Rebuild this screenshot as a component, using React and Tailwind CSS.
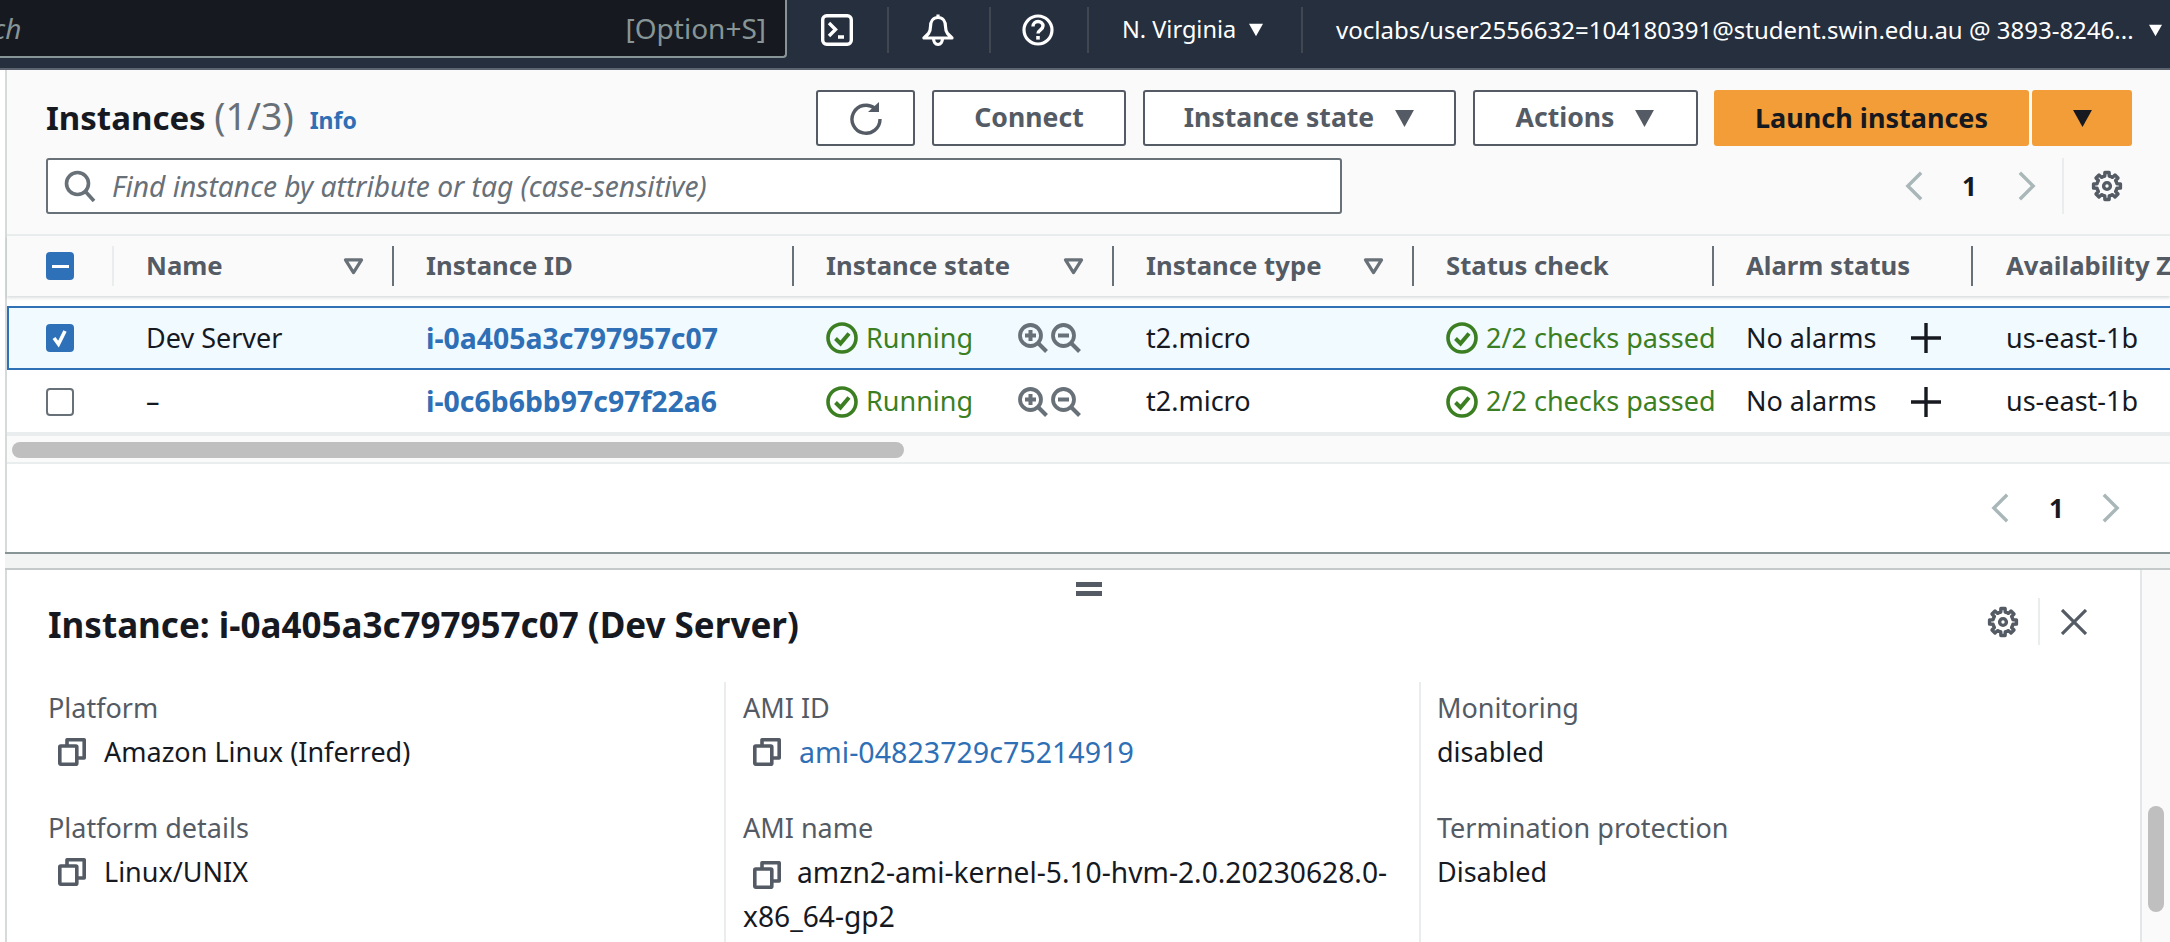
import React from "react";

const gearPath = (() => {
  const pts = [];
  const teeth = 8;
  for (let i = 0; i < teeth; i++) {
    const a = (i / teeth) * Math.PI * 2;
    const w = (Math.PI * 2) / teeth;
    [[-0.5, 10.2], [-0.28, 10.2], [-0.2, 13.6], [0.2, 13.6], [0.28, 10.2]].forEach(([o, r]) => {
      const t = a + o * w;
      pts.push(`${(16 + r * Math.cos(t)).toFixed(2)} ${(16 + r * Math.sin(t)).toFixed(2)}`);
    });
  }
  return "M" + pts.join("L") + "Z";
})();

const Gear = ({ className }) => (
  <svg viewBox="0 0 32 32" className={className} fill="none" stroke="#545b64" strokeWidth="3.4" strokeLinejoin="round">
    <path d={gearPath} />
    <circle cx="16" cy="16" r="3.4" />
  </svg>
);

const Caret = ({ className, color = "#545b64" }) => (
  <svg viewBox="0 0 20 18" className={className}>
    <path d="M1 1h18L10 17z" fill={color} />
  </svg>
);

const SortCaret = () => (
  <svg viewBox="0 0 22 18" className="w-[21px] h-[17px] shrink-0">
    <path d="M2.5 2h17L11 15.5z" fill="none" stroke="#687078" strokeWidth="3.4" strokeLinejoin="round" />
  </svg>
);

const Chevron = ({ left, className }) => (
  <svg viewBox="0 0 20 32" className={className} fill="none" stroke="#aab7b8" strokeWidth="3.6">
    <path d={left ? "M17 2 3 16l14 14" : "M3 2l14 14L3 30"} />
  </svg>
);

const CheckCircle = () => (
  <svg viewBox="0 0 32 32" className="w-8 h-8 shrink-0" fill="none" stroke="#3b7f22" strokeWidth="3.6">
    <circle cx="16" cy="16" r="14" />
    <path d="M9.5 16.5l5 5 8.5-10" strokeWidth="4" />
  </svg>
);

const Mag = ({ plus }) => (
  <svg viewBox="0 0 30 30" className="w-[30px] h-[30px] shrink-0" fill="none" stroke="#687078" strokeWidth="3.8">
    <circle cx="12.5" cy="12.5" r="10.5" />
    <path d="M20 20l8.5 8.5" strokeWidth="4" />
    <path d={plus ? "M7 12.5h11M12.5 7v11" : "M7 12.5h11"} strokeWidth="4" />
  </svg>
);

const Copy = () => (
  <svg viewBox="0 0 28 28" className="w-7 h-7 shrink-0" fill="none" stroke="#545b64" strokeWidth="3.6" strokeLinejoin="round">
    <rect x="1.8" y="8" width="17" height="18.2" rx="1" />
    <path d="M9 7.5V1.8h17.2V20H19" />
  </svg>
);

const NavSep = () => <div className="w-[2px] h-[46px] bg-[#414750] shrink-0" />;

const OutlineBtn = ({ w, children }) => (
  <button className={"h-[56px] flex items-center justify-center gap-5 bg-white border-2 border-[#545b64] rounded-[3px] text-[#545b64] font-bold text-[26.6px] shrink-0 " + w}>
    {children}
  </button>
);

const cols = "grid grid-cols-[107px_280px_400px_320px_300px_300px_259px_197px]";

const HeadCell = ({ children, sort }) => (
  <div className="h-[40px] flex items-center justify-between pl-[32px] pr-[28px] border-r-2 border-[#687078]">
    <span className="whitespace-nowrap">{children}</span>
    {sort && <SortCaret />}
  </div>
);

const Row = ({ checked, name, id }) => (
  <div className={cols + " items-center text-[#16191f] text-[27px] " + (checked ? "h-[64px] bg-[#f1faff] border-y-2 border-[#3070b6] shadow-[inset_2px_0_0_#3070b6]" : "h-[62px] bg-white pt-[1px]")}>
    <div className="pl-[39px]">
      {checked ? (
        <div className="w-[28px] h-[28px] rounded-[4px] bg-[#2f71b8] flex items-center justify-center">
          <svg viewBox="0 0 28 28" className="w-7 h-7" fill="none" stroke="#fff" strokeWidth="3.6"><path d="M8 14l4.5 6L19 7" /></svg>
        </div>
      ) : (
        <div className="w-[28px] h-[28px] rounded-[4px] border-2 border-[#687078] bg-white" />
      )}
    </div>
    <div className="pl-[32px]">{name}</div>
    <div className="pl-[32px] font-bold text-[#2e6fb5] text-[28.4px] whitespace-nowrap">{id}</div>
    <div className="pl-[32px] flex items-center">
      <CheckCircle />
      <span className="ml-[8px] text-[#3b7f22] w-[152px]">Running</span>
      <div className="flex items-center gap-[3px]"><Mag plus /><Mag /></div>
    </div>
    <div className="pl-[32px]">t2.micro</div>
    <div className="pl-[32px] flex items-center">
      <CheckCircle />
      <span className="ml-[8px] text-[#3b7f22] whitespace-nowrap w-[230px] overflow-hidden shrink-0">2/2 checks passed</span>
    </div>
    <div className="pl-[32px] flex items-center">
      <span className="w-[165px] shrink-0">No alarms</span>
      <svg viewBox="0 0 30 30" className="w-[30px] h-[30px] shrink-0" fill="none" stroke="#16191f" strokeWidth="3.4"><path d="M0 15h30M15 0v30" /></svg>
    </div>
    <div className="pl-[33px] whitespace-nowrap">us-east-1b</div>
  </div>
);

const Field = ({ label, children }) => (
  <div className="mb-[32px]">
    <div className="text-[#545b64] leading-[44px]">{label}</div>
    {children}
  </div>
);

const Value = ({ children, link }) => (
  <div className="flex items-center h-[44px]">
    <div className="ml-[10px] mr-[18px]"><Copy /></div>
    <span className={link ? "text-[#2e6fb5] text-[28.6px]" : ""}>{children}</span>
  </div>
);

export default function App() {
  return (
    <div className="w-[2170px] h-[942px] overflow-hidden flex flex-col bg-white font-['Noto_Sans',sans-serif]">
      {/* top navigation */}
      <div className="h-[70px] shrink-0 bg-[#252f3e] border-b-2 border-[#5b646f] flex items-start text-white">
        <div className="w-[787px] h-[58px] shrink-0 bg-[#16191f] border-r-2 border-b-2 border-[#879596] rounded-br-[4px] flex items-center justify-between pr-[19px] text-[#879596] text-[28px] overflow-hidden">
          <span className="italic -ml-[62px]">Search</span>
          <span>[Option+S]</span>
        </div>
        <div className="flex-1 h-[52px] mt-[4px] flex items-center text-[24px]">
          <svg viewBox="0 0 32 32" className="w-8 h-8 ml-[34px] shrink-0" fill="none" stroke="#fff" strokeWidth="3.4">
            <rect x="1.7" y="1.7" width="28.6" height="28.6" rx="4" />
            <path d="M8 9l6.5 6.5L8 22M17 23h6" />
          </svg>
          <div className="ml-[34px]"><NavSep /></div>
          <svg viewBox="0 0 32 34" className="w-8 h-[34px] ml-[33px] shrink-0" fill="none" stroke="#fff" strokeWidth="3.2" strokeLinejoin="round">
            <path d="M16 1.5v3M16 4.5c-5 0-7.5 4-7.5 9 0 3-.5 5-2 7L2 25h28l-4.5-4.5c-1.5-2-2-4-2-7 0-5-2.5-9-7.5-9z" />
            <path d="M11.5 25c0 4 2 6.5 4.5 6.5s4.5-2.5 4.5-6.5" />
          </svg>
          <div className="ml-[35px]"><NavSep /></div>
          <svg viewBox="0 0 32 32" className="w-8 h-8 ml-[31px] shrink-0" fill="none" stroke="#fff" strokeWidth="3.2">
            <circle cx="16" cy="16" r="14" />
            <path d="M11 12.5c0-3 2.2-5 5-5s5 2 5 4.6c0 3.6-5 3.8-5 7.4" strokeWidth="3.4" />
            <path d="M16 22v3.6" strokeWidth="3.6" />
          </svg>
          <div className="ml-[33px]"><NavSep /></div>
          <span className="ml-[33px] whitespace-nowrap w-[113px] shrink-0 text-[23.5px]">N. Virginia</span>
          <Caret className="w-[16px] h-[14px] ml-[13px] shrink-0" color="#fff" />
          <div className="ml-[37px]"><NavSep /></div>
          <span className="ml-[33px] whitespace-nowrap w-[800px] shrink-0">voclabs/user2556632=104180391@student.swin.edu.au @ 3893-8246...</span>
          <Caret className="w-[15px] h-[13px] ml-[12px] shrink-0" color="#fff" />
        </div>
      </div>

      {/* instances */}
      <div className="ml-[5px] border-l-2 border-[#d5dbdb] h-[482px] shrink-0 flex flex-col bg-white">
        <div className="h-[164px] shrink-0 bg-[#fafafa] pl-[39px] flex flex-col">
          <div className="h-[56px] mt-[20px] flex items-center">
            <h1 className="text-[33px] font-bold text-[#16191f] whitespace-nowrap -mt-[3px]">Instances <span className="font-normal text-[#687078] text-[37.5px]">(1/3)</span></h1>
            <span className="ml-[16px] mt-[4px] font-bold text-[#2e6fb5] text-[23px]">Info</span>
            <div className="ml-auto mr-[38px] flex items-center gap-[17px]">
              <OutlineBtn w="w-[99px]">
                <svg viewBox="0 0 34 34" className="w-[34px] h-[34px]" fill="none" stroke="#545b64" strokeWidth="3.4">
                  <path d="M26 7.5A14 14 0 1 0 31 18" />
                  <path d="M19 11h11V1z" fill="#545b64" strokeWidth="0" />
                </svg>
              </OutlineBtn>
              <OutlineBtn w="w-[194px]">Connect</OutlineBtn>
              <OutlineBtn w="w-[313px]">Instance state <Caret className="w-[21px] h-[19px]" /></OutlineBtn>
              <OutlineBtn w="w-[225px]">Actions <Caret className="w-[21px] h-[19px]" /></OutlineBtn>
              <div className="flex gap-[3px] -ml-[1px]">
                <button className="w-[315px] h-[56px] bg-[#f29d38] rounded-[3px] text-[#16191f] font-bold text-[27px]">Launch instances</button>
                <button className="w-[100px] h-[56px] bg-[#f29d38] rounded-[3px] flex items-center justify-center"><Caret className="w-[21px] h-[19px]" color="#16191f" /></button>
              </div>
            </div>
          </div>
          <div className="mt-[12px] h-[56px] flex items-center">
            <div className="w-[1296px] h-[56px] bg-white border-2 border-[#687078] rounded-[3px] flex items-center pl-[16px]">
              <svg viewBox="0 0 32 32" className="w-[32px] h-[32px] shrink-0" fill="none" stroke="#687078" strokeWidth="3.6">
                <circle cx="13.5" cy="13.5" r="11" />
                <path d="M21 21l9 10" />
              </svg>
              <span className="ml-[16px] italic text-[#687078] text-[28.2px]">Find instance by attribute or tag (case-sensitive)</span>
            </div>
            <div className="ml-[563px] flex items-center">
              <Chevron left className="w-[19px] h-[32px]" />
              <span className="ml-[38px] font-bold text-[#16191f] text-[26px] w-[15px]">1</span>
              <Chevron className="ml-[40px] w-[19px] h-[32px]" />
              <div className="ml-[26px] w-[2px] h-[56px] bg-[#eaeded]" />
              <Gear className="ml-[27px] w-[32px] h-[32px]" />
            </div>
          </div>
        </div>

        <div className="h-[2px] shrink-0 bg-[#eaeded]" />
        <div className={cols + " h-[60px] shrink-0 items-center bg-[#fafafa] shadow-[0_2px_3px_rgba(0,28,36,0.15)] font-bold text-[#545b64] text-[25.7px] relative"}>
          <div className="h-[40px] flex items-center pl-[39px] border-r-2 border-[#eaeded]">
            <div className="w-[28px] h-[28px] rounded-[4px] bg-[#2f71b8] flex items-center justify-center">
              <div className="w-[17px] h-[3px] bg-white" />
            </div>
          </div>
          <HeadCell sort>Name</HeadCell>
          <HeadCell>Instance ID</HeadCell>
          <HeadCell sort>Instance state</HeadCell>
          <HeadCell sort>Instance type</HeadCell>
          <HeadCell>Status check</HeadCell>
          <HeadCell>Alarm status</HeadCell>
          <div className="pl-[33px] whitespace-nowrap overflow-hidden">Availability Zone</div>
        </div>
        <div className="h-[10px] shrink-0 bg-white" />
        <Row checked name="Dev Server" id="i-0a405a3c797957c07" />
        <Row name="–" id="i-0c6b6bb97c97f22a6" />
        <div className="h-[4px] shrink-0 bg-[#eaeded]" />
        <div className="h-[26px] shrink-0 bg-[#fafafa] pl-[5px] pt-[6px]">
          <div className="w-[892px] h-[16px] rounded-[8px] bg-[#bfbfbf]" />
        </div>
        <div className="h-[2px] shrink-0 bg-[#eaeded]" />
        <div className="flex-1 flex items-center justify-end pr-[50px]">
          <Chevron left className="w-[19px] h-[32px]" />
          <span className="ml-[39px] font-bold text-[#16191f] text-[26px] w-[15px]">1</span>
          <Chevron className="ml-[37px] w-[19px] h-[32px]" />
        </div>
      </div>

      {/* splitter */}
      <div className="h-[18px] shrink-0 ml-[5px] bg-[#f2f3f3] border-y-2 border-t-[#879596] border-b-[#c4c9c9]" />

      {/* details */}
      <div className="flex-1 min-h-0 ml-[5px] border-l-2 border-[#d5dbdb] flex relative">
        <div className="absolute left-[1069px] top-[12px] w-[26px] h-[14px] flex flex-col justify-between">
          <div className="h-[5px] bg-[#545b64]" />
          <div className="h-[5px] bg-[#545b64]" />
        </div>
        <div className="flex-1 min-w-0 flex flex-col">
          <div className="h-[112px] shrink-0 pl-[41px] pr-[53px] pt-[28px] flex items-start">
            <h2 className="text-[35px] font-bold text-[#16191f] leading-[54px] whitespace-nowrap">Instance: i-0a405a3c797957c07 (Dev Server)</h2>
            <div className="ml-auto flex items-center h-[47px]">
              <Gear className="w-[32px] h-[32px]" />
              <div className="ml-[19px] w-[2px] h-[47px] bg-[#eaeded]" />
              <svg viewBox="0 0 26 26" className="ml-[21px] w-[26px] h-[26px]" fill="none" stroke="#545b64" strokeWidth="3.2"><path d="M1 1l24 24M25 1L1 25" /></svg>
            </div>
          </div>
          <div className="flex-1 grid grid-cols-[676px_695px_1fr] pl-[41px] pt-[4px] text-[27px] text-[#16191f]">
            <div>
              <Field label="Platform"><Value>Amazon Linux (Inferred)</Value></Field>
              <Field label="Platform details"><Value>Linux/UNIX</Value></Field>
            </div>
            <div className="border-l-2 border-[#eaeded] -mt-[4px] pt-[4px] pl-[17px] pr-[20px]">
              <Field label="AMI ID"><Value link>ami-04823729c75214919</Value></Field>
              <Field label="AMI name">
                <div className="leading-[44px] text-[28.2px]">
                  <span className="inline-block align-middle ml-[10px] mr-[16px]"><Copy /></span>
                  amzn2-ami-kernel-5.10-hvm-2.0.20230628.0-x86_64-gp2
                </div>
              </Field>
            </div>
            <div className="border-l-2 border-[#eaeded] -mt-[4px] pt-[4px] pl-[16px]">
              <Field label="Monitoring"><div className="leading-[44px]">disabled</div></Field>
              <Field label="Termination protection"><div className="leading-[44px]">Disabled</div></Field>
            </div>
          </div>
        </div>
        <div className="w-[30px] shrink-0 bg-[#fafafa] border-l-2 border-[#e4e7e7] relative">
          <div className="absolute left-[6px] top-[236px] w-[16px] h-[106px] rounded-[8px] bg-[#bfbfbf]" />
        </div>
      </div>
    </div>
  );
}
